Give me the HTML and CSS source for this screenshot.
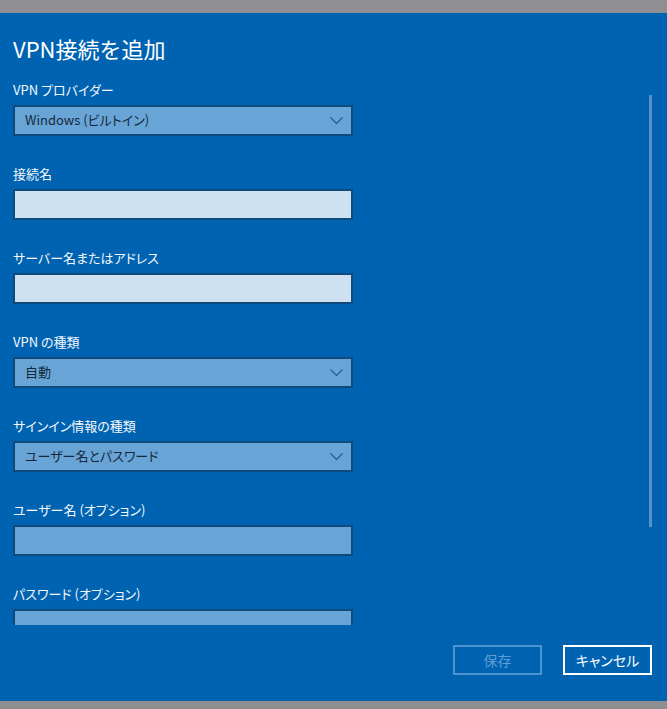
FILE: index.html
```html
<!DOCTYPE html>
<html lang="ja">
<head>
<meta charset="utf-8">
<title>VPN接続を追加</title>
<link rel="stylesheet" href="styles.css">
</head>
<body>
<div class="top"></div>
<div class="panel">
  <h1 class="title">VPN接続を追加</h1>
  <div class="main">
    <div class="fields">
      <div class="field">
        <div class="label">VPN プロバイダー</div>
        <div class="box select"><span>Windows (ビルトイン)</span><svg class="chev" width="13" height="7" viewBox="0 0 13 7"><path d="M0.5 0.5 L6.5 6.5 L12.5 0.5" fill="none" stroke="#25598a" stroke-width="1.1"/></svg></div>
      </div>
      <div class="field">
        <div class="label">接続名</div>
        <div class="box input light"></div>
      </div>
      <div class="field">
        <div class="label">サーバー名またはアドレス</div>
        <div class="box input light"></div>
      </div>
      <div class="field">
        <div class="label">VPN の種類</div>
        <div class="box select"><span>自動</span><svg class="chev" width="13" height="7" viewBox="0 0 13 7"><path d="M0.5 0.5 L6.5 6.5 L12.5 0.5" fill="none" stroke="#25598a" stroke-width="1.1"/></svg></div>
      </div>
      <div class="field">
        <div class="label">サインイン情報の種類</div>
        <div class="box select"><span>ユーザー名とパスワード</span><svg class="chev" width="13" height="7" viewBox="0 0 13 7"><path d="M0.5 0.5 L6.5 6.5 L12.5 0.5" fill="none" stroke="#25598a" stroke-width="1.1"/></svg></div>
      </div>
      <div class="field">
        <div class="label">ユーザー名 (オプション)</div>
        <div class="box input"></div>
      </div>
      <div class="field">
        <div class="label">パスワード (オプション)</div>
        <div class="box input"></div>
      </div>
    </div>
    <div class="scrollbar"></div>
  </div>
  <div class="footer">
    <button class="btn disabled">保存</button>
    <button class="btn primary">キャンセル</button>
  </div>
</div>
<div class="bottom"></div>
</body>
</html>
```

FILE: styles.css
```css
html, body {
  margin: 0;
  padding: 0;
  height: 100%;
}
body {
  background: #8f8f91;
  font-family: "Noto Sans CJK JP", "Noto Sans", sans-serif;
  font-feature-settings: "palt";
  display: flex;
  flex-direction: column;
  overflow: hidden;
}
.top {
  height: 13px;
  flex: none;
}
.panel {
  flex: none;
  height: 688px;
  box-sizing: border-box;
  background: #0063b1;
  padding: 19px 15px 0 13px;
  display: flex;
  flex-direction: column;
}
.title {
  margin: 0;
  font-size: 22px;
  line-height: 32px;
  font-weight: 400;
  color: #ffffff;
  font-feature-settings: normal;
}
.main {
  margin-top: 16px;
  height: 545px;
  display: flex;
}
.fields {
  width: 340px;
  overflow: hidden;
  display: flex;
  flex-direction: column;
  gap: 28px;
}
.field {
  display: flex;
  flex-direction: column;
  flex: none;
}
.label {
  font-size: 13px;
  line-height: 20px;
  color: #f4f8fc;
  margin-bottom: 5px;
}
.box {
  box-sizing: border-box;
  height: 31px;
  border: 2px solid #0e4a7b;
  background: #68a5d6;
}
.box.light {
  background: #cde1f1;
}
.select {
  display: flex;
  align-items: center;
  justify-content: space-between;
  padding: 0 8px 2px 10px;
  font-size: 13px;
  color: #15293d;
}
.chev {
  display: block;
  margin-top: 2px;
}
.scrollbar {
  margin-left: auto;
  margin-top: 15px;
  width: 3px;
  height: 432px;
  background: #5c90c2;
}
.footer {
  margin-top: 20px;
  display: flex;
  justify-content: flex-end;
  gap: 21px;
}
.btn {
  box-sizing: border-box;
  width: 89px;
  height: 30px;
  padding: 0;
  background: transparent;
  font-family: "Noto Sans CJK JP", "Noto Sans", sans-serif;
  font-feature-settings: "palt";
  font-size: 14px;
  line-height: 24px;
  padding-bottom: 1px;
}
.btn.disabled {
  border: 2px solid #4f92d0;
  color: #5c9dd6;
}
.btn.primary {
  border: 2px solid #ffffff;
  color: #ffffff;
}
.bottom {
  flex: 1;
}
```
